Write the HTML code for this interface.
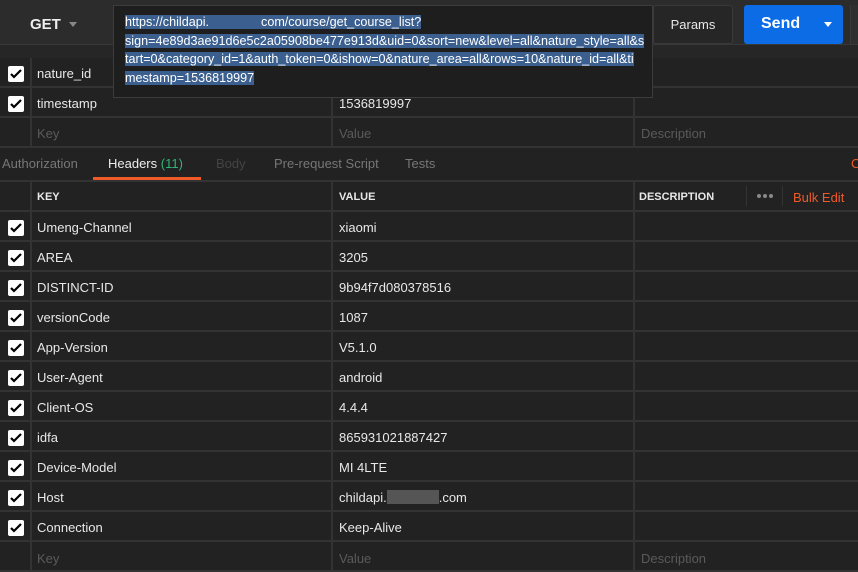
<!DOCTYPE html>
<html><head><style>
*{margin:0;padding:0;box-sizing:border-box}
body{width:858px;height:565px;overflow:hidden;background:#222;font-family:"Liberation Sans",sans-serif;color:#e8e8e8;font-size:13px;position:relative}
.abs{position:absolute}
.row{position:absolute;left:0;width:858px;height:30px;border-bottom:2px solid #333}
.vl{position:absolute;top:0;bottom:0;width:2px;background:#333}
.cb{position:absolute;left:8px;top:8px;width:16px;height:16px;background:#fff;border-radius:2px}
.cb svg{position:absolute;left:2px;top:3px}
.t{position:absolute;top:8px;white-space:nowrap}
.ph{color:#5a5a5a}
</style></head><body>
<div class="abs" style="left:0;top:0;width:858px;height:44px;background:#2c2c2c"></div>
<div class="abs" style="left:0;top:44px;width:858px;height:14px;background:#262626;border-top:1px solid #383838"></div>
<div class="abs" style="left:30px;top:16px;font-size:15px;font-weight:bold;color:#eee">GET</div>
<div class="abs" style="left:69px;top:22px;width:0;height:0;border-left:4px solid transparent;border-right:4px solid transparent;border-top:5px solid #888"></div>
<div class="abs" style="left:653px;top:5px;width:80px;height:39px;border:1px solid #3a3a3a;border-radius:3px;background:#262626;text-align:center;line-height:37px;font-size:13px">Params</div>
<div class="abs" style="left:744px;top:5px;width:99px;height:39px;background:#0c6ce6;border-radius:3px"></div>
<div class="abs" style="left:761px;top:15px;font-size:16px;font-weight:bold;color:#fff">Send</div>
<div class="abs" style="left:824px;top:22px;width:0;height:0;border-left:4px solid transparent;border-right:4px solid transparent;border-top:5px solid #fff"></div>
<div class="abs" style="left:850px;top:5px;width:8px;height:39px;background:#2f2f2f;border-left:1px solid #3a3a3a"></div>

<!-- upper table -->
<div class="row" style="top:58px"><div class="vl" style="left:30px"></div><div class="vl" style="left:331px"></div><div class="vl" style="left:633px"></div><div class="cb"><svg width="12" height="10"><path d="M1 5l3 3 7-7" stroke="#000" stroke-width="2.2" fill="none"/></svg></div><div class="t" style="left:37px">nature_id</div></div>
<div class="row" style="top:88px"><div class="vl" style="left:30px"></div><div class="vl" style="left:331px"></div><div class="vl" style="left:633px"></div><div class="cb"><svg width="12" height="10"><path d="M1 5l3 3 7-7" stroke="#000" stroke-width="2.2" fill="none"/></svg></div><div class="t" style="left:37px">timestamp</div><div class="t" style="left:339px">1536819997</div></div>
<div class="row" style="top:118px"><div class="vl" style="left:30px"></div><div class="vl" style="left:331px"></div><div class="vl" style="left:633px"></div><div class="t ph" style="left:37px">Key</div><div class="t ph" style="left:339px">Value</div><div class="t ph" style="left:641px">Description</div></div>

<!-- popup -->
<div class="abs" style="left:113px;top:5px;width:540px;height:93px;background:#1e1e1e;border:1px solid #3c3c3c"></div>
<div class="abs" style="left:125px;top:13px;width:520px;font-size:12.6px;line-height:18.5px;color:#fff">
<span style="background:#3b5f8e">https://childapi.<span style="display:inline-block;width:52px"></span>com/course/get_course_list?</span><br>
<span style="background:#3b5f8e">sign=4e89d3ae91d6e5c2a05908be477e913d&amp;uid=0&amp;sort=new&amp;level=all&amp;nature_style=all&amp;s</span><br>
<span style="background:#3b5f8e">tart=0&amp;category_id=1&amp;auth_token=0&amp;ishow=0&amp;nature_area=all&amp;rows=10&amp;nature_id=all&amp;ti</span><br>
<span style="background:#3b5f8e">mestamp=1536819997</span></div>

<!-- tabs -->
<div class="abs" style="left:0;top:148px;width:858px;height:34px;border-bottom:2px solid #333"></div>
<div class="abs" style="left:2px;top:156px;color:#777">Authorization</div>
<div class="abs" style="left:108px;top:156px;color:#eee">Headers <span style="color:#2fb576">(11)</span></div>
<div class="abs" style="left:93px;top:177px;width:108px;height:3px;background:#f05a28"></div>
<div class="abs" style="left:216px;top:156px;color:#444">Body</div>
<div class="abs" style="left:274px;top:156px;color:#777">Pre-request Script</div>
<div class="abs" style="left:405px;top:156px;color:#777">Tests</div>
<div class="abs" style="left:851px;top:156px;color:#f05a28">C</div>

<div class="row" style="top:182px"><div class="vl" style="left:30px"></div><div class="vl" style="left:331px"></div><div class="vl" style="left:633px"></div><div class="vl" style="left:746px;top:4px;bottom:4px;width:1px"></div><div class="vl" style="left:782px;top:4px;bottom:4px;width:1px"></div>
<div class="t" style="left:37px;top:9px;font-size:11px;font-weight:bold">KEY</div><div class="t" style="left:339px;top:9px;font-size:11px;font-weight:bold">VALUE</div><div class="t" style="left:639px;top:9px;font-size:11px;font-weight:bold">DESCRIPTION</div>
<div class="abs" style="left:757px;top:12px;width:4px;height:4px;border-radius:50%;background:#888"></div><div class="abs" style="left:763px;top:12px;width:4px;height:4px;border-radius:50%;background:#888"></div><div class="abs" style="left:769px;top:12px;width:4px;height:4px;border-radius:50%;background:#888"></div>
<div class="t" style="left:793px;color:#f05a28">Bulk Edit</div></div>

<div id="rows"></div>
<script>
var d=[["Umeng-Channel","xiaomi"],["AREA","3205"],["DISTINCT-ID","9b94f7d080378516"],["versionCode","1087"],["App-Version","V5.1.0"],["User-Agent","android"],["Client-OS","4.4.4"],["idfa","865931021887427"],["Device-Model","MI 4LTE"],["Host","childapi.<span style='display:inline-block;width:52px;height:14px;background:#555;vertical-align:-2px'></span>.com"],["Connection","Keep-Alive"]];
var h="";
d.forEach(function(r,i){h+='<div class="row" style="top:'+(212+i*30)+'px"><div class="vl" style="left:30px"></div><div class="vl" style="left:331px"></div><div class="vl" style="left:633px"></div><div class="cb"><svg width="12" height="10"><path d="M1 5l3 3 7-7" stroke="#000" stroke-width="2.2" fill="none"/></svg></div><div class="t" style="left:37px">'+r[0]+'</div><div class="t" style="left:339px">'+r[1]+'</div></div>';});
h+='<div class="row" style="top:542px"><div class="vl" style="left:30px"></div><div class="vl" style="left:331px"></div><div class="vl" style="left:633px"></div><div class="t ph" style="left:37px;top:9px">Key</div><div class="t ph" style="left:339px;top:9px">Value</div><div class="t ph" style="left:641px;top:9px">Description</div></div>';
document.getElementById("rows").innerHTML=h;
</script>
</body></html>
